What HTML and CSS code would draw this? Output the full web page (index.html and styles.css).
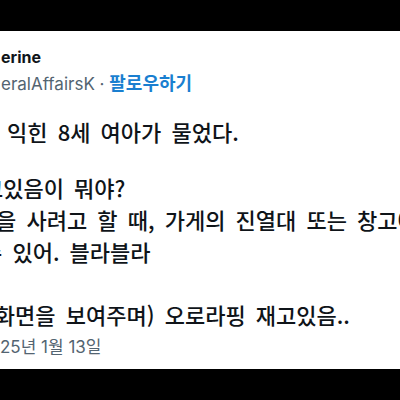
FILE: index.html
```html
<!DOCTYPE html>
<html lang="ko">
<head>
<meta charset="utf-8">
<link rel="stylesheet" href="styles.css">
</head>
<body>
<div class="frame">
  <div class="bar"></div>
  <div class="card">
    <div class="name">erine</div>
    <div class="handle">eralAffairsK <span class="dot">·</span> <span class="follow">팔로우하기</span></div>
    <div class="tweet">
      <div class="line l1">익힌 8세 여아가 물었다.</div>
      <div class="line l2">고있음이 뭐야?</div>
      <div class="line l3">을 사려고 할 때, 가게의 진열대 또는 창고에</div>
      <div class="line l4">수 있어. 블라블라</div>
      <div class="line l5">(화면을 보여주며) 오로라핑 재고있음..</div>
    </div>
    <div class="date">25년 1월 13일</div>
  </div>
  <div class="bar"></div>
</div>
</body>
</html>
```
FILE: styles.css
```css
html, body {
  margin: 0;
  padding: 0;
  background: #000;
}
.frame {
  width: 400px;
  height: 400px;
  display: flex;
  flex-direction: column;
  overflow: hidden;
}
.bar {
  height: 31px;
  background: #000;
  flex: none;
}
.card {
  flex: 1;
  background: #fff;
  overflow: hidden;
  font-family: Inter, "Noto Sans CJK KR", sans-serif;
  color: #0f1419;
  white-space: nowrap;
}
.name {
  margin-top: 15px;
  line-height: 22px;
  font-size: 16px;
  font-weight: 700;
  padding-left: 1px;
}
.handle {
  margin-top: 3px;
  line-height: 22px;
  font-size: 17px;
  color: #536471;
  padding-left: 1px;
}
.follow {
  color: #1a7fd0;
  font-weight: 700;
  font-size: 18px;
  font-family: "Noto Sans CJK KR", sans-serif;
}
.tweet {
  margin-top: 20px;
  font-family: "Noto Sans CJK KR", sans-serif;
  font-size: 22px;
  font-weight: 500;
  word-spacing: 4px;
}
.line {
  line-height: 32px;
}
.l1 { padding-left: 7px; }
.l2 { margin-top: 24px; margin-left: -17px; }
.l3 { margin-left: -4px; }
.l4 { margin-left: -18px; }
.l5 { margin-top: 31px; margin-left: -13px; }
.date {
  margin-top: 6px;
  line-height: 22px;
  font-size: 17px;
  color: #536471;
  font-family: Inter, "Noto Sans CJK KR", sans-serif;
}
```
